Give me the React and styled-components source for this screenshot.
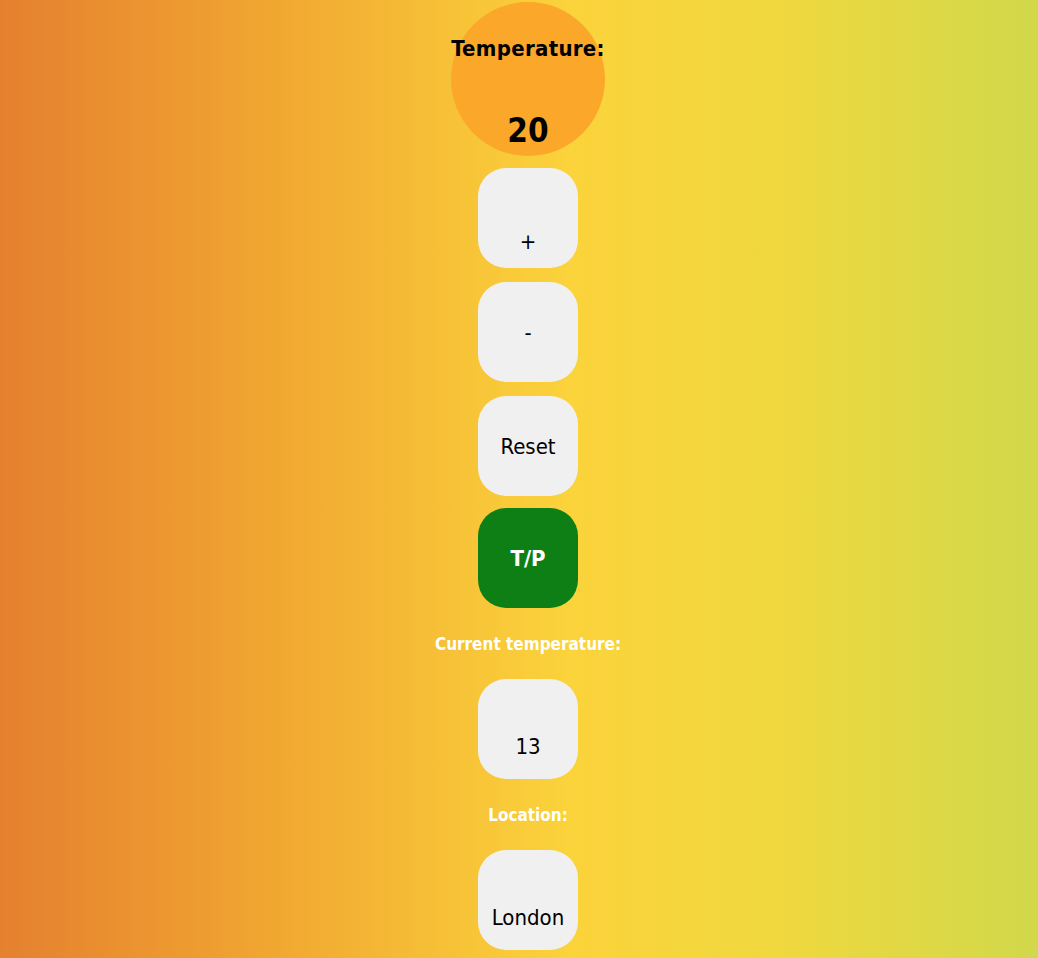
import React from 'react';
import styled, { createGlobalStyle } from 'styled-components';

const GlobalStyle = createGlobalStyle`
  html, body {
    margin: 0;
    overflow: hidden;
  }
  body {
    min-height: 958px;
    font-family: "DejaVu Sans Condensed", "Liberation Sans", sans-serif;
    background: linear-gradient(to right, #e5802f 0%, #f0a531 25%, #fbd33b 55%, #f0d83e 75%, #d1d84b 100%);
  }
`;

const App = () => {
  return (
    <>
      <GlobalStyle />
      <Container>
        <Dial>
          <DialLabel>Temperature:</DialLabel>
          <DialValue>20</DialValue>
        </Dial>
        <Button $drop={46}>+</Button>
        <Button>-</Button>
        <Button $gap={12}>Reset</Button>
        <Button $green>T/P</Button>
        <Label>Current temperature:</Label>
        <Button $drop={34}>13</Button>
        <Label>Location:</Label>
        <Button $drop={34}>London</Button>
      </Container>
    </>
  );
};

export default App;

const Container = styled.div`
  display: flex;
  flex-direction: column;
  align-items: center;
  padding: 2px 0 0 18px;
`;

const Dial = styled.div`
  width: 154px;
  height: 154px;
  border-radius: 50%;
  background: #fba82a;
  display: flex;
  flex-direction: column;
  align-items: center;
  margin-bottom: 12px;
`;

const DialLabel = styled.div`
  margin-top: 34px;
  font-size: 22px;
  font-weight: bold;
  color: #000;
  letter-spacing: 0.3px;
`;

const DialValue = styled.div`
  margin-top: 50px;
  font-size: 33px;
  font-weight: bold;
  color: #000;
`;

const Button = styled.div`
  width: 100px;
  height: 100px;
  box-sizing: border-box;
  border-radius: 28px;
  background: ${p => (p.$green ? '#0e7f14' : '#f0f0f0')};
  color: ${p => (p.$green ? '#fff' : '#000')};
  font-size: 22px;
  font-weight: ${p => (p.$green ? 'bold' : 'normal')};
  display: flex;
  justify-content: center;
  align-items: center;
  padding-top: ${p => p.$drop || 0}px;
  margin-bottom: ${p => p.$gap || 14}px;
`;

const Label = styled.div`
  color: #fff;
  font-size: 17px;
  font-weight: bold;
  margin: 12px 0 25px;
`;
